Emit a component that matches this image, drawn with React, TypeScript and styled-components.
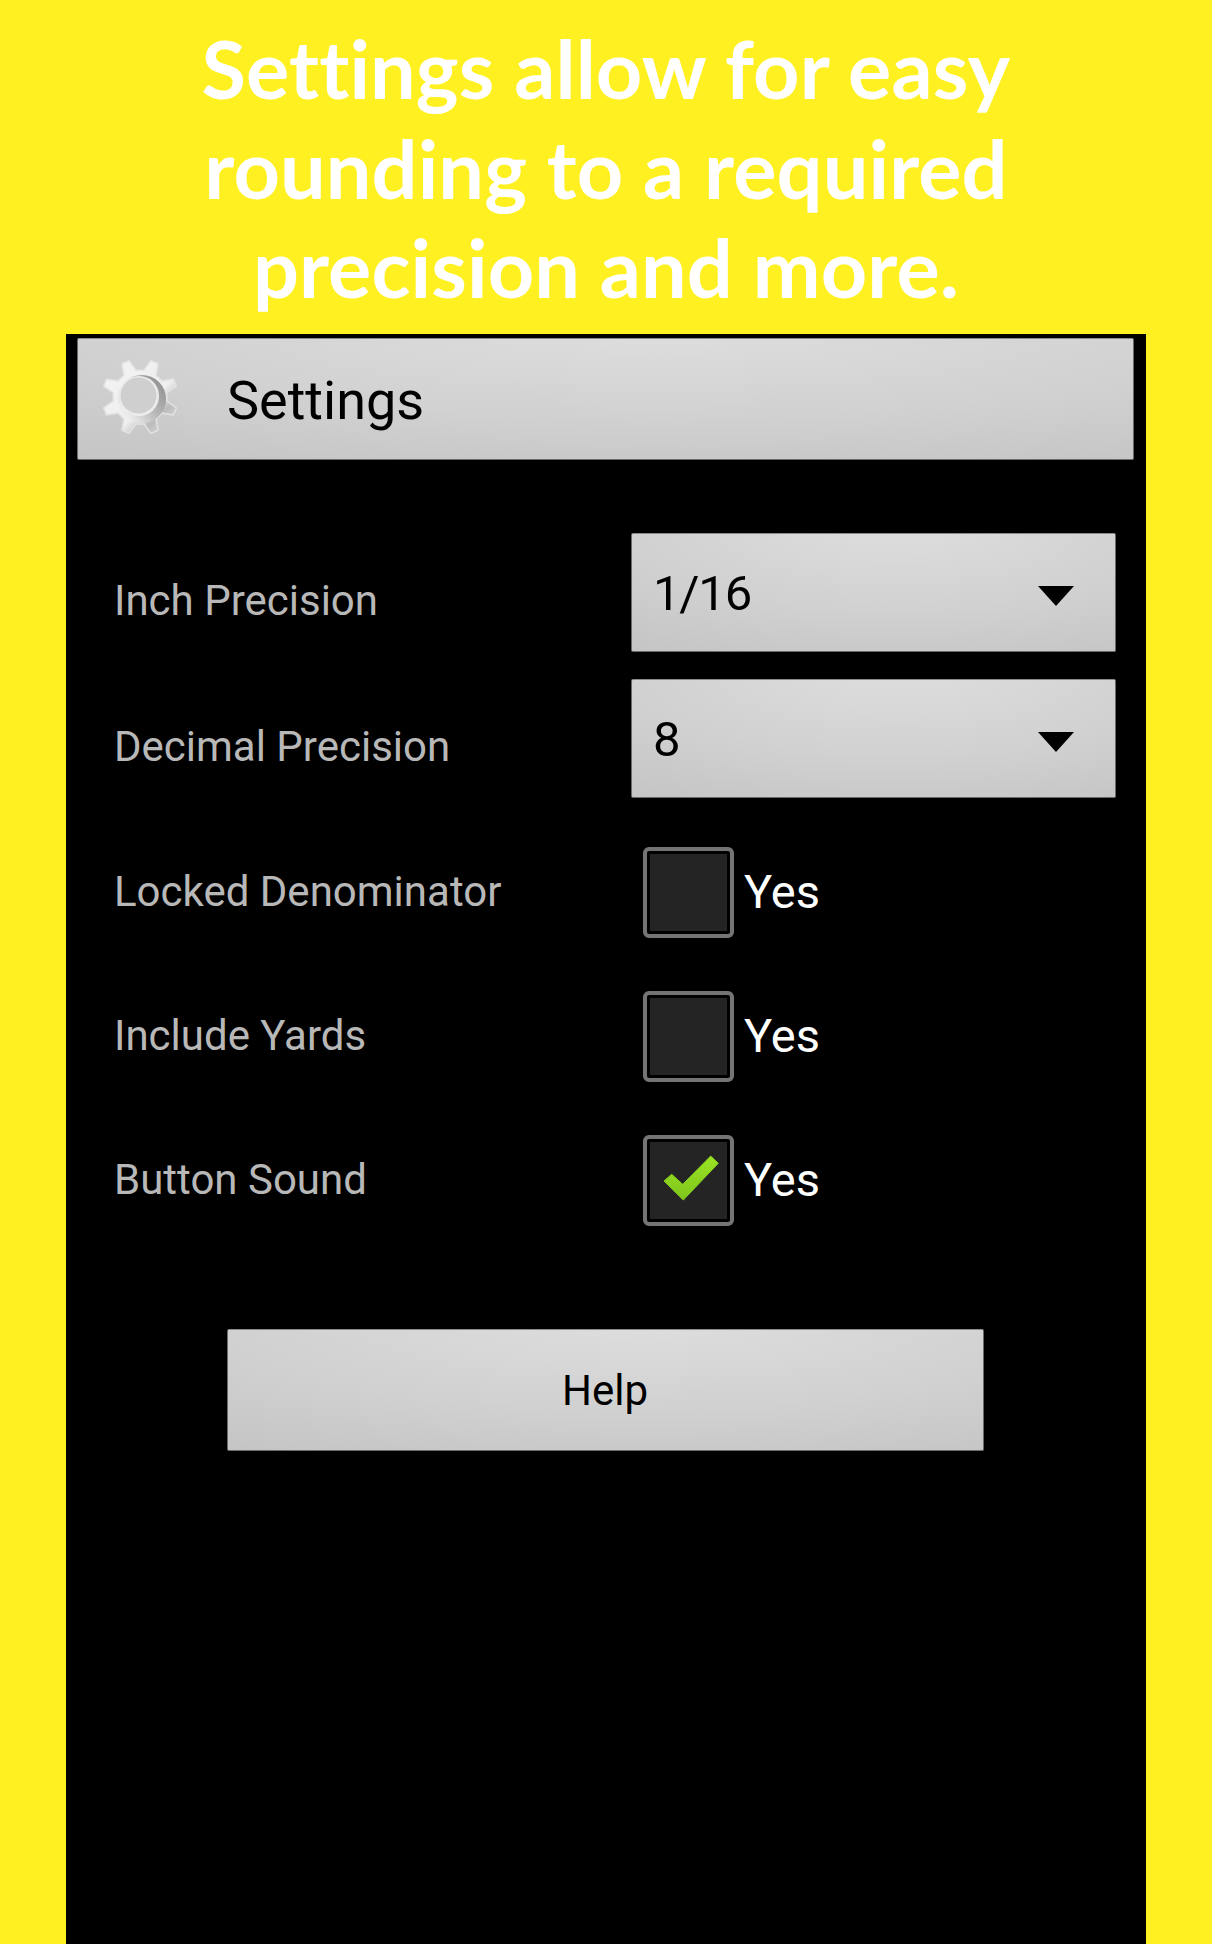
import React from "react";
import styled, { createGlobalStyle, css } from "styled-components";

const GlobalStyle = createGlobalStyle`
  html, body { margin: 0; padding: 0; background: #fff022; }
  #root { width: 1212px; height: 1944px; }
`;

const Page = styled.div`
  width: 1212px;
  height: 1944px;
  box-sizing: border-box;
  padding: 0 66px;
  display: flex;
  flex-direction: column;
  overflow: hidden;
  background: #fff022;
`;

const Headline = styled.h1`
  margin: 0 -66px;
  height: 334px;
  box-sizing: border-box;
  padding-top: 18px;
  text-align: center;
  font-family: "Lato", "Liberation Sans", sans-serif;
  font-weight: 700;
  font-size: 81px;
  line-height: 99.5px;
  letter-spacing: 0.1px;
  color: #fff;
`;

const Panel = styled.main`
  flex: 1;
  background: #000;
  padding: 4px 12px 0 11px;
  font-family: "Roboto", "Liberation Sans", sans-serif;
`;

const raised = css`
  box-sizing: border-box;
  border-radius: 2px;
  border: 1px solid #6a6a6a;
  border-top-color: #8a8a8a;
  background: radial-gradient(110% 150% at 55% -10%, #dedede 0%, #d1d1d1 50%, #c1c1c1 100%);
  color: #000;
`;

const TitleBar = styled.header`
  ${raised}
  height: 122px;
  display: flex;
  align-items: center;
  padding-left: 20px;
`;

const GearIcon = styled.svg`
  margin-top: -5px;
`;

const TitleText = styled.span`
  margin-left: 44px;
  padding-top: 4px;
  font-size: 54px;
  line-height: 1;
`;

const Form = styled.section`
  padding: 73px 18px 0 37px;
  display: flex;
  flex-direction: column;
`;

const SelectRow = styled.div`
  display: flex;
  height: 119px;
  margin-bottom: 27px;
`;

const CheckGroup = styled.div`
  padding-top: 22px;
  display: flex;
  flex-direction: column;
  gap: 53px;
`;

const CheckRow = styled.div`
  display: flex;
  align-items: center;
  height: 91px;
`;

const Label = styled.label<{ $shift?: boolean }>`
  width: 517px;
  flex: none;
  font-size: 42px;
  line-height: 48px;
  color: #b8b8b8;
  padding-top: ${(p) => (p.$shift ? "44px" : "0")};
  margin-top: ${(p) => (p.$shift ? "0" : "-2px")};
`;

const Select = styled.div`
  ${raised}
  flex: 1;
  display: flex;
  align-items: center;
  justify-content: space-between;
  padding: 1px 41px 0 21px;
  font-size: 49px;
  letter-spacing: -1.2px;
`;

const Caret = styled.span`
  width: 0;
  height: 0;
  border-left: 18px solid transparent;
  border-right: 18px solid transparent;
  border-top: 20px solid #000;
  margin-top: 5px;
`;

const CheckBox = styled.span`
  width: 91px;
  height: 91px;
  box-sizing: border-box;
  margin-left: 12px;
  border: 4px solid #747474;
  border-radius: 6px;
  background: #000;
  padding: 3px;
  display: flex;
`;

const CheckFace = styled.span`
  flex: 1;
  background: #242424;
  display: flex;
  align-items: center;
  justify-content: center;
`;

const CheckMark = styled.svg`
  margin: -5px 0 0 5px;
`;

const YesText = styled.span`
  margin: -2px 0 0 10px;
  font-size: 47px;
  color: #fff;
`;

const HelpRow = styled.div`
  display: flex;
  justify-content: center;
  margin: 103px 0 0 -20px;
`;

const HelpButton = styled.button`
  ${raised}
  width: 757px;
  height: 122px;
  font-family: inherit;
  font-size: 42px;
  padding: 0;
`;

function gearPath(): string {
  const cx = 42, cy = 43, outer = 38, root = 27;
  const pts: string[] = [];
  for (let i = 0; i < 8; i++) {
    const a = ((i * 45 + 22.5 - 90) * Math.PI) / 180;
    const p = (r: number, d: number) => {
      const t = a + (d * Math.PI) / 180;
      return `${(cx + r * Math.cos(t)).toFixed(1)} ${(cy + r * Math.sin(t)).toFixed(1)}`;
    };
    pts.push(`${i === 0 ? "M" : "L"}${p(root, -14)}`, `L${p(outer, -6)}`, `L${p(outer, 6)}`, `L${p(root, 14)}`);
    pts.push(`A${root} ${root} 0 0 1 ${p(root, 31)}`);
  }
  return pts.join(" ") + " Z";
}

const Gear = () => (
  <GearIcon width="85" height="85" viewBox="0 0 85 85" aria-hidden="true">
    <defs>
      <linearGradient id="gearBody" x1="0.1" y1="0.1" x2="0.9" y2="0.95">
        <stop offset="0" stopColor="#f3f3f3" />
        <stop offset="0.6" stopColor="#eeeeee" />
        <stop offset="0.8" stopColor="#bcbcbc" />
        <stop offset="1" stopColor="#dcdcdc" />
      </linearGradient>
      <linearGradient id="gearDepth" x1="0.95" y1="0.25" x2="0.2" y2="0.85">
        <stop offset="0" stopColor="#959595" />
        <stop offset="0.55" stopColor="#bdbdbd" />
        <stop offset="1" stopColor="#ececec" />
      </linearGradient>
    </defs>
    <path d={gearPath()} fill="url(#gearBody)" stroke="#e2e2e2" strokeWidth="1.5" strokeLinejoin="round" />
    <circle cx="44" cy="45" r="24" fill="url(#gearDepth)" />
    <circle cx="41" cy="42" r="20" fill="#ececec" />
    <circle cx="40.5" cy="41.5" r="18" fill="#cfcfcf" />
  </GearIcon>
);

const Check = () => (
  <CheckMark width="58" height="48" viewBox="0 0 58 48" aria-hidden="true">
    <defs>
      <linearGradient id="checkFill" x1="0" y1="0" x2="0" y2="1">
        <stop offset="0" stopColor="#9ae424" />
        <stop offset="1" stopColor="#7fc41c" />
      </linearGradient>
    </defs>
    <path
      d="M2 27 L9.7 20.3 L20.7 30.3 L48.7 2 L56.3 9.3 L21.3 46 Z"
      fill="url(#checkFill)"
      stroke="#86cc1e"
      strokeWidth="1"
      strokeLinejoin="round"
    />
  </CheckMark>
);

const checks = [
  { label: "Locked Denominator", on: false },
  { label: "Include Yards", on: false },
  { label: "Button Sound", on: true },
];

export default function App() {
  return (
    <Page>
      <GlobalStyle />
      <Headline>
        Settings allow for easy
        <br />
        rounding to a required
        <br />
        precision and more.
      </Headline>
      <Panel>
        <TitleBar>
          <Gear />
          <TitleText>Settings</TitleText>
        </TitleBar>
        <Form>
          <SelectRow>
            <Label $shift>Inch Precision</Label>
            <Select>
              1/16
              <Caret />
            </Select>
          </SelectRow>
          <SelectRow>
            <Label $shift>Decimal Precision</Label>
            <Select>
              8
              <Caret />
            </Select>
          </SelectRow>
          <CheckGroup>
            {checks.map((c) => (
              <CheckRow key={c.label}>
                <Label>{c.label}</Label>
                <CheckBox>
                  <CheckFace>{c.on && <Check />}</CheckFace>
                </CheckBox>
                <YesText>Yes</YesText>
              </CheckRow>
            ))}
          </CheckGroup>
          <HelpRow>
            <HelpButton>Help</HelpButton>
          </HelpRow>
        </Form>
      </Panel>
    </Page>
  );
}
